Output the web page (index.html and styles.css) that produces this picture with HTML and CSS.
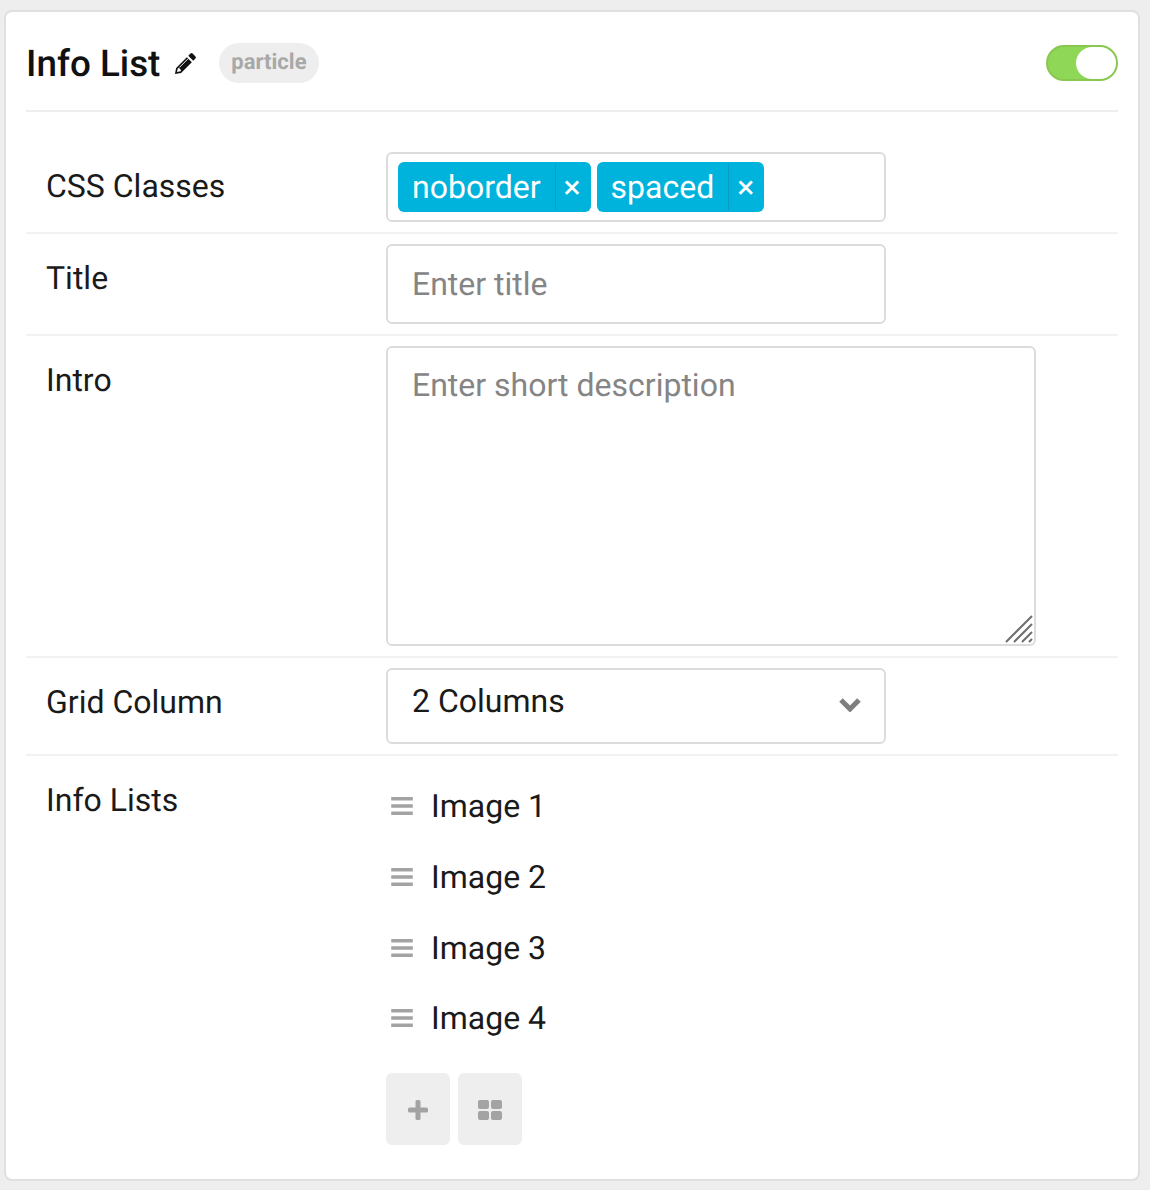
FILE: index.html
```html
<!DOCTYPE html>
<html>
<head>
<meta charset="UTF-8">
<title>Info List</title>
<link rel="stylesheet" href="styles.css">
</head>
<body>
<div class="card">
  <div class="card-header">
    <h1 class="card-title">Info List</h1>
    <svg class="edit-icon" viewBox="0 0 24 24"><path d="M17.2 1.6a1.6 1.6 0 0 1 2.2 0l3 3a1.6 1.6 0 0 1 0 2.2l-2.3 2.3-5.2-5.2zM13.4 5.4l5.200 5.200L7.400 21.800 1 23l1.200-6.400zM4 17l-.9 3.900 3.900-.9.300-1.200-2.100-2.100z" fill-rule="evenodd"/><path class="edit-shine" d="M5.500 16.200L14.800 6.900"/></svg>
    <span class="badge">particle</span>
    <div class="toggle"><div class="toggle-knob"></div></div>
  </div>

  <div class="row row-classes">
    <label class="row-label">CSS Classes</label>
    <div class="tags">
      <span class="tag"><span class="tag-text">noborder</span><span class="tag-x">×</span></span>
      <span class="tag"><span class="tag-text">spaced</span><span class="tag-x">×</span></span>
    </div>
  </div>

  <div class="row row-title">
    <label class="row-label">Title</label>
    <input class="field" placeholder="Enter title">
  </div>

  <div class="row row-intro">
    <label class="row-label">Intro</label>
    <div class="textarea-wrap">
      <textarea class="field field-area" placeholder="Enter short description"></textarea>
      <svg class="resizer" viewBox="0 0 28 28"><path d="M1 27L27 1M9 27L27 9M17 27L27 17M24 27l3-3"/></svg>
    </div>
  </div>

  <div class="row row-select">
    <label class="row-label">Grid Column</label>
    <div class="field select">
      <span>2 Columns</span>
      <svg class="chevron" viewBox="0 0 24 16"><path d="M3 4l9 9 9-9"/></svg>
    </div>
  </div>

  <div class="row row-list">
    <label class="row-label">Info Lists</label>
    <div class="list-col">
      <ul class="items">
        <li><svg class="handle" viewBox="0 0 24 20"><path d="M0 2h24M0 10h24M0 18h24"/></svg>Image 1</li>
        <li><svg class="handle" viewBox="0 0 24 20"><path d="M0 2h24M0 10h24M0 18h24"/></svg>Image 2</li>
        <li><svg class="handle" viewBox="0 0 24 20"><path d="M0 2h24M0 10h24M0 18h24"/></svg>Image 3</li>
        <li><svg class="handle" viewBox="0 0 24 20"><path d="M0 2h24M0 10h24M0 18h24"/></svg>Image 4</li>
      </ul>
      <div class="buttons">
        <button class="icon-btn"><svg viewBox="0 0 20 20"><rect x="0" y="7.500" width="20" height="5" rx="1.500"/><rect x="7.500" y="0" width="5" height="20" rx="1.500"/></svg></button>
        <button class="icon-btn"><svg class="grid-icon" viewBox="0 0 24 20"><rect x="0" y="0" width="11" height="9" rx="2"/><rect x="13" y="0" width="11" height="9" rx="2"/><rect x="0" y="11" width="11" height="9" rx="2"/><rect x="13" y="11" width="11" height="9" rx="2"/></svg></button>
      </div>
    </div>
  </div>
</div>
</body>
</html>
```
FILE: styles.css
```css
* {
  box-sizing: border-box;
}

body {
  margin: 0;
  padding: 10px 10px 8px 4px;
  background: #eeeeee;
  font-family: Roboto, sans-serif;
  font-size: 32px;
  color: #1a1a1a;
  text-rendering: geometricPrecision;
}

.card {
  height: 1171px;
  background: #fff;
  border: 2px solid #e0e0e0;
  border-radius: 8px;
  padding: 0 20px;
}

.card-header {
  display: flex;
  align-items: center;
  height: 100px;
  border-bottom: 2px solid #eeeeee;
  padding-top: 4px;
}

.card-title {
  margin: 0;
  font-size: 36.8px;
  font-weight: 500;
  color: #111;
  white-space: nowrap;
}

.edit-icon {
  width: 23px;
  height: 23px;
  margin-left: 14px;
  fill: #111;
}

.edit-shine {
  fill: none;
  stroke: #fff;
  stroke-width: 1;
}

.badge {
  margin-left: 22px;
  height: 40px;
  line-height: 40px;
  padding: 0 12px;
  border-radius: 20px;
  background: #eeeeee;
  color: #a8a8a8;
  font-size: 22px;
  font-weight: 700;
}

.toggle {
  margin-left: auto;
  width: 72px;
  height: 36px;
  border-radius: 18px;
  background: #8fd857;
  border: 2px solid #8ac750;
  display: flex;
  justify-content: flex-end;
}

.toggle-knob {
  width: 40px;
  height: 32px;
  border-radius: 16px;
  background: #fff;
}

.row {
  display: grid;
  grid-template-columns: 360px 1fr;
  border-bottom: 2px solid #f2f2f2;
}

.row-label {
  padding-left: 20px;
}

.row-classes {
  height: 122px;
  padding-top: 40px;
  align-items: center;
  padding-bottom: 10px;
}

.row-classes .row-label {
  padding-bottom: 2px;
}

.tags {
  width: 500px;
  height: 70px;
  border: 2px solid #dcdcdc;
  border-radius: 6px;
  padding: 8px 10px;
  display: flex;
  gap: 6px;
}

.tag {
  display: flex;
  align-items: stretch;
  height: 50px;
  background: #00b3dc;
  color: #fff;
  border-radius: 6px;
  line-height: 50px;
}

.tag-text {
  padding: 0 14px;
}

.tag-x {
  width: 36px;
  margin: 2px 0;
  padding-right: 2px;
  line-height: 46px;
  text-align: center;
  border-left: 1px solid #0a9cc4;
}

.field {
  display: block;
  width: 500px;
  height: 80px;
  border: 2px solid #dcdcdc;
  border-radius: 6px;
  padding: 0 24px;
  background: #fff;
  outline: none;
  font-family: Roboto, sans-serif;
  font-size: 32px;
  color: #1a1a1a;
  text-rendering: geometricPrecision;
}

.field::placeholder {
  color: #858585;
  opacity: 1;
}

.row-title {
  height: 102px;
  padding-top: 10px;
}

.row-title .row-label {
  padding-top: 15px;
}

.row-intro {
  height: 322px;
  padding-top: 10px;
}

.row-intro .row-label {
  padding-top: 15px;
}

.textarea-wrap {
  position: relative;
  width: 650px;
  height: 300px;
}

.field-area {
  width: 650px;
  height: 300px;
  padding: 18px 24px;
  resize: none;
}

.resizer {
  position: absolute;
  right: 3px;
  bottom: 3px;
  width: 28px;
  height: 28px;
  fill: none;
  stroke: #6e6e6e;
  stroke-width: 2;
}

.row-select {
  height: 98px;
  padding-top: 10px;
}

.row-select .row-label {
  padding-top: 15px;
}

.select {
  height: 76px;
  display: flex;
  align-items: center;
  justify-content: space-between;
  padding-right: 22px;
  padding-bottom: 10px;
}

.chevron {
  width: 24px;
  height: 16px;
  fill: none;
  stroke: #7f7f7f;
  stroke-width: 5;
  margin-top: 6px;
}

.row-list {
  border-bottom: 0;
  padding-top: 15px;
}

.row-list .row-label {
  padding-top: 10px;
}

.items {
  list-style: none;
  margin: 0;
  padding: 0;
}

.items li {
  display: flex;
  align-items: center;
  height: 70.7px;
  padding-left: 5px;
  font-size: 32px;
}

.handle {
  width: 22px;
  height: 18px;
  margin-right: 18px;
  fill: none;
  stroke: #a3a3a3;
  stroke-width: 4;
}

.buttons {
  display: flex;
  gap: 8px;
  margin-top: 19px;
}

.icon-btn {
  width: 64px;
  height: 72px;
  padding: 2px 0 0;
  border: 0;
  border-radius: 6px;
  background: #eeeeee;
  display: flex;
  align-items: center;
  justify-content: center;
}

.icon-btn svg {
  width: 20px;
  height: 20px;
  fill: #a3a3a3;
}

.icon-btn .grid-icon {
  width: 24px;
}
```
